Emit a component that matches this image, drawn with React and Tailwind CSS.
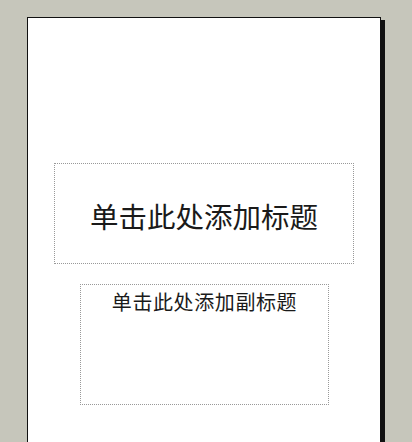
export default function App() {
  return (
    <div className="h-[442px] w-[412px] overflow-hidden bg-[#c6c6bb] pl-[27px] pt-[17px]">
      <div className="h-[440px] w-[354px] border-l border-r border-t border-[#111] bg-white shadow-[4px_3px_0_#111]">
        <div className="ml-[26px] mt-[145px] flex h-[101px] w-[300px] items-center justify-center border border-dotted border-[#999]">
          <p
            className="pt-[6px] text-[28.5px] leading-none text-[#1a1a1a]"
            style={{ fontFamily: '"Noto Sans CJK SC", sans-serif' }}
          >
            单击此处添加标题
          </p>
        </div>
        <div className="ml-[52px] mt-[20px] flex h-[121px] w-[249px] flex-col items-center border border-dotted border-[#999] pt-[7px]">
          <p
            className="text-[20px] leading-none tracking-[0.6px] text-[#1a1a1a]"
            style={{ fontFamily: '"Noto Sans CJK SC", sans-serif' }}
          >
            单击此处添加副标题
          </p>
        </div>
      </div>
    </div>
  );
}
